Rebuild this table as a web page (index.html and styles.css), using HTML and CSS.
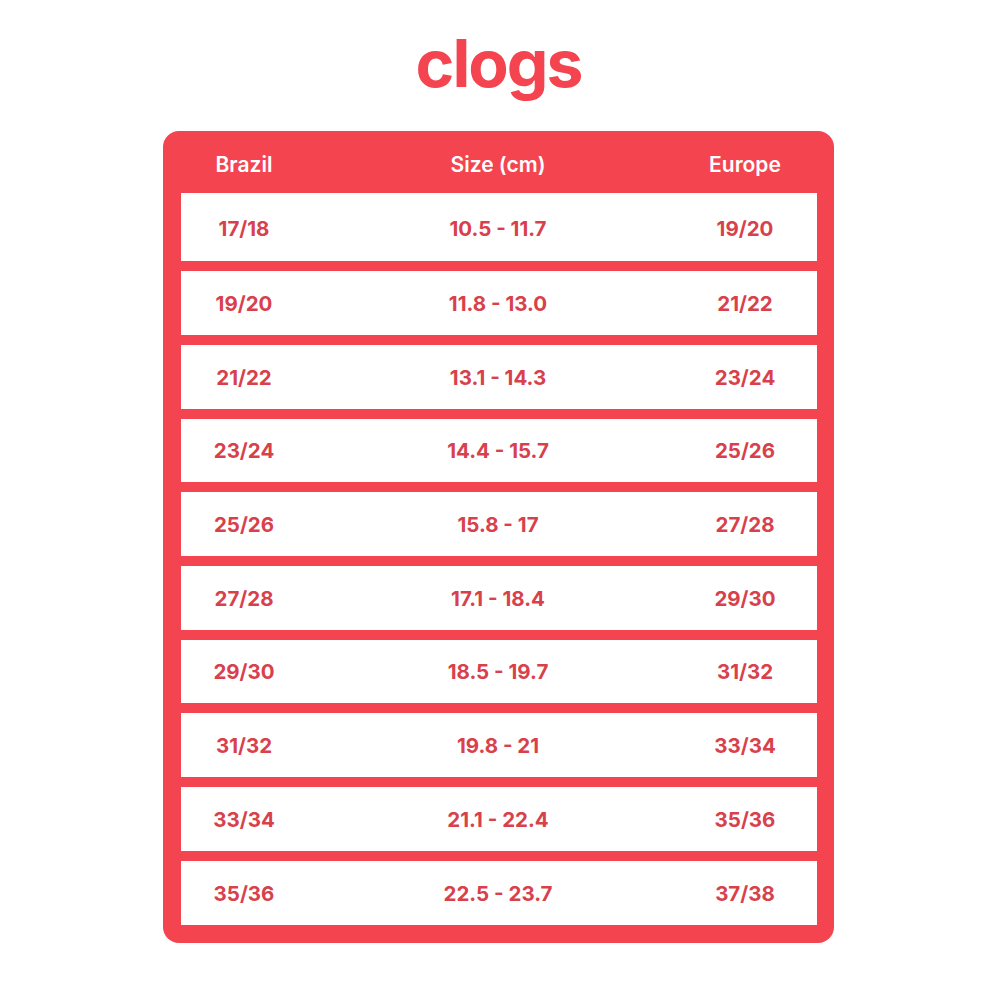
FILE: index.html
```html
<!DOCTYPE html>
<html>
<head>
<meta charset="utf-8">
<link rel="stylesheet" href="styles.css">
</head>
<body>
<div class="page">
  <h1 class="title">clogs</h1>
  <div class="card">
    <div class="row head">
      <div class="c1">Brazil</div>
      <div class="c2">Size (cm)</div>
      <div class="c3">Europe</div>
    </div>
    <div class="row first"><div class="c1">17/18</div><div class="c2">10.5 - 11.7</div><div class="c3">19/20</div></div>
    <div class="row"><div class="c1">19/20</div><div class="c2">11.8 - 13.0</div><div class="c3">21/22</div></div>
    <div class="row"><div class="c1">21/22</div><div class="c2">13.1 - 14.3</div><div class="c3">23/24</div></div>
    <div class="row short"><div class="c1">23/24</div><div class="c2">14.4 - 15.7</div><div class="c3">25/26</div></div>
    <div class="row"><div class="c1">25/26</div><div class="c2">15.8 - 17</div><div class="c3">27/28</div></div>
    <div class="row"><div class="c1">27/28</div><div class="c2">17.1 - 18.4</div><div class="c3">29/30</div></div>
    <div class="row short"><div class="c1">29/30</div><div class="c2">18.5 - 19.7</div><div class="c3">31/32</div></div>
    <div class="row"><div class="c1">31/32</div><div class="c2">19.8 - 21</div><div class="c3">33/34</div></div>
    <div class="row"><div class="c1">33/34</div><div class="c2">21.1 - 22.4</div><div class="c3">35/36</div></div>
    <div class="row"><div class="c1">35/36</div><div class="c2">22.5 - 23.7</div><div class="c3">37/38</div></div>
  </div>
</div>
</body>
</html>
```
FILE: styles.css
```css
* { box-sizing: border-box; }
html, body { margin: 0; padding: 0; background: #ffffff; }
body { font-family: Inter, "Open Sans", sans-serif; }
.page {
  width: 997px;
  height: 997px;
  display: flex;
  flex-direction: column;
  align-items: center;
}
.title {
  margin: 0;
  height: 131px;
  padding-top: 23px;
  font-size: 66px;
  line-height: 80px;
  font-weight: 700;
  color: #f4444f;
  letter-spacing: -2px;
}
.card {
  width: 671px;
  background: #f4444f;
  border-radius: 16px;
  padding: 0 17px 18px 18px;
  display: flex;
  flex-direction: column;
  gap: 10px;
}
.row {
  height: 64px;
  background: #ffffff;
  display: grid;
  grid-template-columns: 126px 382px 112px;
  align-items: center;
  justify-items: center;
  font-size: 20.5px;
  font-weight: 700;
  color: #d8414c;
}
.row.short {
  height: 63px;
}
.row.first {
  height: 68px;
  padding-top: 2px;
}
.row.head {
  height: 62px;
  margin-bottom: -10px;
  padding-top: 4px;
  background: transparent;
  color: #ffffff;
  font-weight: 600;
  font-size: 21px;
}
```
